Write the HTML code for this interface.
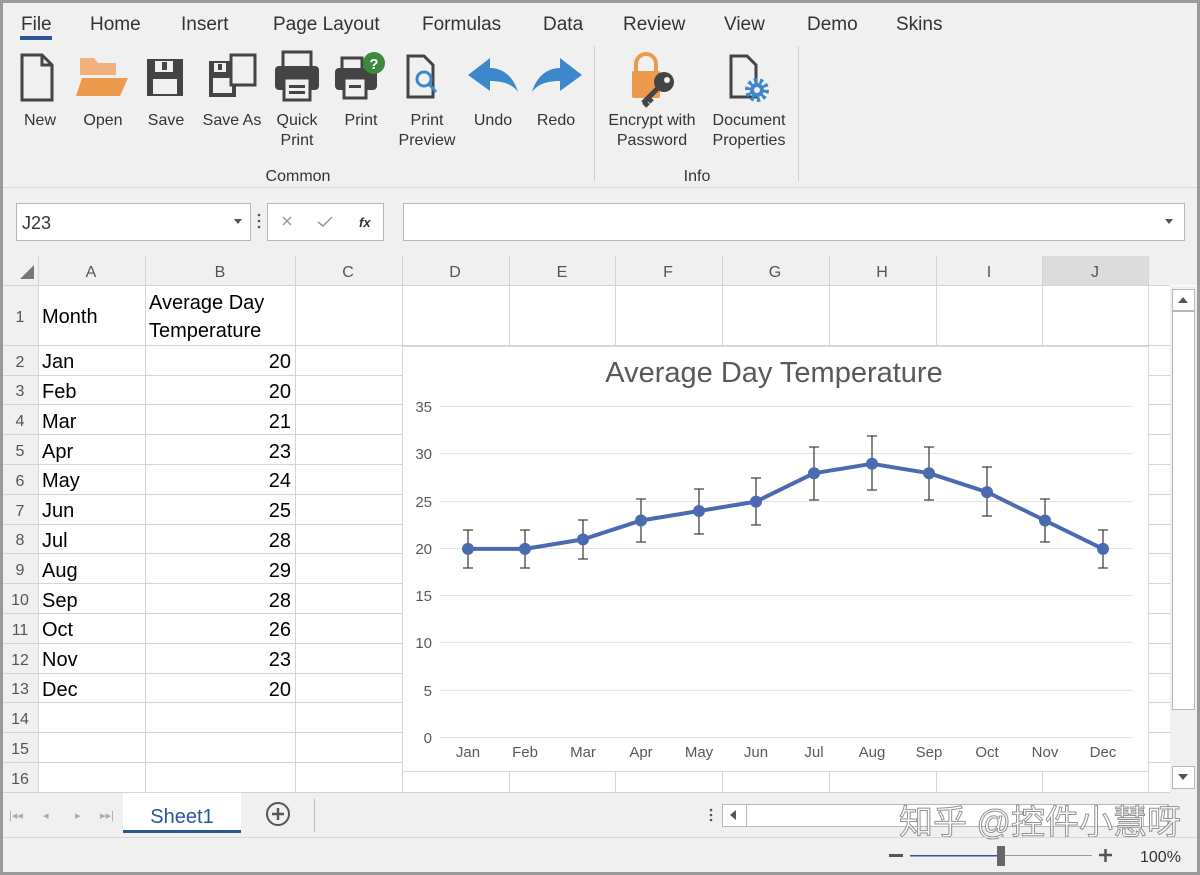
<!DOCTYPE html>
<html><head><meta charset="utf-8"><style>
html,body{margin:0;padding:0;background:#fff}
svg{display:block}
text{font-family:"Liberation Sans","Noto Sans CJK SC",sans-serif}
</style></head><body>
<svg width="1200" height="875" viewBox="0 0 1200 875" xmlns="http://www.w3.org/2000/svg">
<rect width="1200" height="875" fill="#f0f0f0"/>
<!-- tabs -->
<g font-size="19" fill="#333">
<text x="21" y="30">File</text><text x="90" y="30">Home</text><text x="181" y="30">Insert</text><text x="273" y="30">Page Layout</text><text x="422" y="30">Formulas</text><text x="543" y="30">Data</text><text x="623" y="30">Review</text><text x="724" y="30">View</text><text x="807" y="30">Demo</text><text x="896" y="30">Skins</text>
</g>
<rect x="20" y="36" width="32" height="4" fill="#2b579a"/>
<!-- ribbon icons -->
<g>
<path d="M22 55h20l10 10v35h-30z" fill="none" stroke="#444" stroke-width="3"/>
<path d="M42 55v10h10" fill="none" stroke="#444" stroke-width="3"/>
<path d="M80 58h14l4 5h18v12h-36z" fill="#f0b27a"/>
<path d="M82 78h46l-8 18h-44z" fill="#ee9a4d"/>
<rect x="147" y="59" width="36" height="37" fill="#444"/><rect x="155" y="61" width="18" height="11" fill="#f0f0f0"/><rect x="162" y="62" width="5" height="8" fill="#444"/><rect x="153" y="79" width="24" height="15" fill="#f0f0f0"/>
<rect x="209" y="61" width="27" height="36" fill="#444"/><rect x="214" y="63" width="12" height="9" fill="#f0f0f0"/><rect x="218" y="64" width="4" height="6" fill="#444"/><rect x="213" y="78" width="19" height="15" fill="#f0f0f0"/>
<rect x="231" y="55" width="24" height="30" fill="#f0f0f0" stroke="#444" stroke-width="3"/>
<rect x="283" y="52" width="28" height="16" fill="#f0f0f0" stroke="#444" stroke-width="3"/>
<rect x="275" y="66" width="44" height="24" rx="4" fill="#444"/><rect x="284" y="78" width="26" height="22" fill="#f0f0f0" stroke="#444" stroke-width="3"/><rect x="289" y="85" width="16" height="3" fill="#444"/><rect x="289" y="91" width="16" height="3" fill="#444"/>
<rect x="342" y="58" width="20" height="12" fill="#f0f0f0" stroke="#444" stroke-width="3"/>
<rect x="335" y="68" width="42" height="22" rx="4" fill="#444"/><rect x="344" y="78" width="22" height="20" fill="#f0f0f0" stroke="#444" stroke-width="3"/><rect x="349" y="85" width="12" height="3" fill="#444"/>
<circle cx="374" cy="63" r="11" fill="#3b8a3e"/><text x="374" y="69" font-size="15" font-weight="bold" fill="#fff" text-anchor="middle">?</text>
<path d="M408 56h16l9 9v32h-25z" fill="none" stroke="#444" stroke-width="3"/>
<circle cx="424" cy="79" r="7" fill="none" stroke="#3f87cc" stroke-width="3"/><path d="M429 84l7 8" stroke="#3f87cc" stroke-width="3"/>
<path d="M468 75l22-17v10c14 0 24 10 28 24c-6-8-15-11-28-11v10z" fill="#3f87cc"/>
<path d="M582 75l-22-17v10c-14 0-24 10-28 24c6-8 15-11 28-11v10z" fill="#3f87cc"/>
<path d="M636 72v-8a10 10 0 0 1 20 0v8" fill="none" stroke="#ee9a4d" stroke-width="4"/>
<rect x="632" y="71" width="28" height="27" rx="2" fill="#ee9a4d"/>
<circle cx="664" cy="82" r="10" fill="#444"/><circle cx="667" cy="80" r="3" fill="#f0f0f0"/><path d="M658 88l-15 15M648 98l4 4M644 102l4 4" stroke="#444" stroke-width="5"/>
<path d="M731 56h16l9 9v32h-25z" fill="none" stroke="#444" stroke-width="3"/>
<circle cx="757" cy="90" r="9" fill="none" stroke="#3f87cc" stroke-width="6" stroke-dasharray="3 2.6"/><circle cx="757" cy="90" r="7" fill="#3f87cc"/><circle cx="757" cy="90" r="3" fill="#f0f0f0"/>
</g>
<g font-size="16" fill="#333" text-anchor="middle">
<text x="40" y="125">New</text><text x="103" y="125">Open</text><text x="166" y="125">Save</text><text x="232" y="125">Save As</text><text x="297" y="125">Quick</text><text x="297" y="145">Print</text><text x="361" y="125">Print</text><text x="427" y="125">Print</text><text x="427" y="145">Preview</text><text x="493" y="125">Undo</text><text x="556" y="125">Redo</text><text x="652" y="125">Encrypt with</text><text x="652" y="145">Password</text><text x="749" y="125">Document</text><text x="749" y="145">Properties</text>
<text x="298" y="181">Common</text><text x="697" y="181">Info</text>
</g>
<rect x="594" y="46" width="1" height="135" fill="#d0d0d0"/><rect x="798" y="46" width="1" height="135" fill="#d0d0d0"/>
<rect x="0" y="187" width="1200" height="1" fill="#d8d8d8"/>
<!-- formula bar -->
<rect x="16.5" y="203.5" width="234" height="37" fill="#fff" stroke="#b8b8b8"/>
<text x="22" y="229" font-size="18" fill="#333">J23</text>
<path d="M234 219h8l-4 5z" fill="#555"/>
<circle cx="259" cy="215" r="1.3" fill="#555"/><circle cx="259" cy="221" r="1.3" fill="#555"/><circle cx="259" cy="227" r="1.3" fill="#555"/>
<rect x="267.5" y="203.5" width="116" height="37" fill="#fff" stroke="#b8b8b8"/>
<path d="M283 217l8 8M291 217l-8 8" stroke="#999" stroke-width="1.5"/>
<path d="M318 222l5 4l9-9" fill="none" stroke="#999" stroke-width="1.5"/>
<text x="359" y="227" font-size="13" font-style="italic" font-weight="bold" font-family="Liberation Serif,serif" fill="#333">fx</text>
<rect x="403.5" y="203.5" width="781" height="37" fill="#fff" stroke="#b8b8b8"/>
<path d="M1165 219h8l-4 5z" fill="#555"/>
<!-- grid -->
<rect x="3" y="256" width="1194" height="536" fill="#fff"/>
<rect x="3" y="256" width="1194" height="29" fill="#f0f0f0"/>
<rect x="3" y="256" width="35" height="536" fill="#f0f0f0"/>
<rect x="1042" y="256" width="106" height="29" fill="#dcdcdc"/>
<path d="M34 265v14h-14z" fill="#777"/>
<g stroke="#d4d4d4" stroke-width="1">
<path d="M3 285.5h1167M3 345.5h1167M3 375.5h1167M3 404.5h1167M3 434.5h1167M3 464.5h1167M3 494.5h1167M3 524.5h1167M3 553.5h1167M3 583.5h1167M3 613.5h1167M3 643.5h1167M3 673.5h1167M3 702.5h1167M3 732.5h1167M3 762.5h1167M3 792.5h1167"/>
<path d="M38.5 256v536M145.5 256v536M295.5 256v536M402.5 256v536M509.5 256v536M615.5 256v536M722.5 256v536M829.5 256v536M936.5 256v536M1042.5 256v536M1148.5 256v536"/>
</g>
<g font-size="16" fill="#555" text-anchor="middle">
<text x="91" y="277">A</text><text x="220" y="277">B</text><text x="348" y="277">C</text><text x="455" y="277">D</text><text x="562" y="277">E</text><text x="668" y="277">F</text><text x="775" y="277">G</text><text x="882" y="277">H</text><text x="989" y="277">I</text><text x="1095" y="277">J</text>
<text x="20" y="322">1</text><text x="20" y="367">2</text><text x="20" y="396">3</text><text x="20" y="426">4</text><text x="20" y="456">5</text><text x="20" y="486">6</text><text x="20" y="516">7</text><text x="20" y="545">8</text><text x="20" y="575">9</text><text x="20" y="605">10</text><text x="20" y="635">11</text><text x="20" y="665">12</text><text x="20" y="694">13</text><text x="20" y="724">14</text><text x="20" y="754">15</text><text x="20" y="784">16</text>
</g>
<g font-size="20" fill="#000">
<text x="42" y="323">Month</text><text x="149" y="309">Average Day</text><text x="149" y="337">Temperature</text>
<text x="42" y="368">Jan</text><text x="42" y="398">Feb</text><text x="42" y="428">Mar</text><text x="42" y="458">Apr</text><text x="42" y="487">May</text><text x="42" y="517">Jun</text><text x="42" y="547">Jul</text><text x="42" y="577">Aug</text><text x="42" y="607">Sep</text><text x="42" y="636">Oct</text><text x="42" y="666">Nov</text><text x="42" y="696">Dec</text>
</g>
<g font-size="20" fill="#000" text-anchor="end">
<text x="291" y="368">20</text><text x="291" y="398">20</text><text x="291" y="428">21</text><text x="291" y="458">23</text><text x="291" y="487">24</text><text x="291" y="517">25</text><text x="291" y="547">28</text><text x="291" y="577">29</text><text x="291" y="607">28</text><text x="291" y="636">26</text><text x="291" y="666">23</text><text x="291" y="696">20</text>
</g>
<!-- chart -->
<rect x="402.5" y="346.5" width="746" height="425" fill="#fff" stroke="#d9d9d9"/>
<text x="774" y="382" font-size="29" fill="#595959" text-anchor="middle">Average Day Temperature</text>
<g stroke="#e3e3e3"><path d="M440 737.5h693M440 690.5h693M440 642.5h693M440 595.5h693M440 548.5h693M440 501.5h693M440 453.5h693M440 406.5h693"/></g>
<g font-size="15" fill="#595959" text-anchor="end">
<text x="432" y="743">0</text><text x="432" y="696">5</text><text x="432" y="648">10</text><text x="432" y="601">15</text><text x="432" y="554">20</text><text x="432" y="507">25</text><text x="432" y="459">30</text><text x="432" y="412">35</text>
</g>
<g font-size="15" fill="#595959" text-anchor="middle">
<text x="468" y="757">Jan</text><text x="525" y="757">Feb</text><text x="583" y="757">Mar</text><text x="641" y="757">Apr</text><text x="699" y="757">May</text><text x="756" y="757">Jun</text><text x="814" y="757">Jul</text><text x="872" y="757">Aug</text><text x="929" y="757">Sep</text><text x="987" y="757">Oct</text><text x="1045" y="757">Nov</text><text x="1103" y="757">Dec</text>
</g>
<g stroke="#444" stroke-width="1.3" fill="none">
<path d="M468 530v38M463 530h10M463 568h10"/>
<path d="M525 530v38M520 530h10M520 568h10"/>
<path d="M583 520v39M578 520h10M578 559h10"/>
<path d="M641 499v43M636 499h10M636 542h10"/>
<path d="M699 489v45M694 489h10M694 534h10"/>
<path d="M756 478v47M751 478h10M751 525h10"/>
<path d="M814 447v53M809 447h10M809 500h10"/>
<path d="M872 436v54M867 436h10M867 490h10"/>
<path d="M929 447v53M924 447h10M924 500h10"/>
<path d="M987 467v49M982 467h10M982 516h10"/>
<path d="M1045 499v43M1040 499h10M1040 542h10"/>
<path d="M1103 530v38M1098 530h10M1098 568h10"/>
</g>
<polyline points="468,548.9 525,548.9 583,539.4 641,520.5 699,511 756,501.6 814,473.2 872,463.8 929,473.2 987,492.1 1045,520.5 1103,548.9" fill="none" stroke="#4a6bb0" stroke-width="4" stroke-linejoin="round"/>
<g fill="#4a6bb0"><circle cx="468" cy="548.9" r="6"/><circle cx="525" cy="548.9" r="6"/><circle cx="583" cy="539.4" r="6"/><circle cx="641" cy="520.5" r="6"/><circle cx="699" cy="511" r="6"/><circle cx="756" cy="501.6" r="6"/><circle cx="814" cy="473.2" r="6"/><circle cx="872" cy="463.8" r="6"/><circle cx="929" cy="473.2" r="6"/><circle cx="987" cy="492.1" r="6"/><circle cx="1045" cy="520.5" r="6"/><circle cx="1103" cy="548.9" r="6"/></g>
<!-- v scrollbar -->
<rect x="1170" y="286" width="27" height="506" fill="#f0f0f0"/>
<rect x="1172.5" y="289.5" width="22" height="21" fill="#fff" stroke="#b8b8b8"/><path d="M1178 303h10l-5-6z" fill="#555"/>
<rect x="1172.5" y="311.5" width="22" height="398" fill="#fff" stroke="#b8b8b8"/>
<rect x="1172.5" y="766.5" width="22" height="22" fill="#fff" stroke="#b8b8b8"/><path d="M1178 774h10l-5 6z" fill="#555"/>
<!-- sheet tabs -->
<rect x="3" y="793" width="1194" height="44" fill="#f0f0f0"/>
<rect x="123" y="793" width="118" height="40" fill="#fff"/>
<rect x="123" y="830" width="118" height="3" fill="#2b579a"/>
<text x="182" y="823" font-size="20" fill="#2b579a" text-anchor="middle">Sheet1</text>
<g font-size="11" fill="#aaa"><text x="9" y="819">|◂◂</text><text x="43" y="819">◂</text><text x="75" y="819">▸</text><text x="100" y="819">▸▸|</text></g>
<circle cx="278" cy="814" r="11" fill="none" stroke="#555" stroke-width="2"/><path d="M272 814h12M278 808v12" stroke="#555" stroke-width="2.4"/>
<rect x="314" y="799" width="1" height="33" fill="#bbb"/>
<circle cx="711" cy="810" r="1.3" fill="#555"/><circle cx="711" cy="815" r="1.3" fill="#555"/><circle cx="711" cy="820" r="1.3" fill="#555"/>
<rect x="722.5" y="804.5" width="446" height="22" fill="#fff" stroke="#b8b8b8"/>
<rect x="722.5" y="804.5" width="24" height="22" fill="#fff" stroke="#b8b8b8"/><path d="M730 815l6-5v10z" fill="#555"/>
<rect x="1143.5" y="804.5" width="24" height="22" fill="#fff" stroke="#b8b8b8"/>
<text x="1040" y="834" font-size="34" fill="#fff" stroke="#888" stroke-width="1" text-anchor="middle" opacity="0.9">知乎 @控件小慧呀</text>
<!-- status -->
<rect x="3" y="837" width="1194" height="1" fill="#d8d8d8"/>
<rect x="889" y="854" width="14" height="3" fill="#555"/>
<rect x="910" y="855" width="92" height="1.5" fill="#2b579a"/><rect x="1002" y="855" width="90" height="1" fill="#999"/>
<rect x="997" y="846" width="8" height="20" fill="#666"/>
<path d="M1099 855h13M1105.5 849v13" stroke="#555" stroke-width="2.5"/>
<text x="1140" y="862" font-size="16" fill="#333">100%</text>
<!-- outer border -->
<rect x="1.5" y="1.5" width="1197" height="872" fill="none" stroke="#9a9a9a" stroke-width="3"/>
</svg>
</body></html>
